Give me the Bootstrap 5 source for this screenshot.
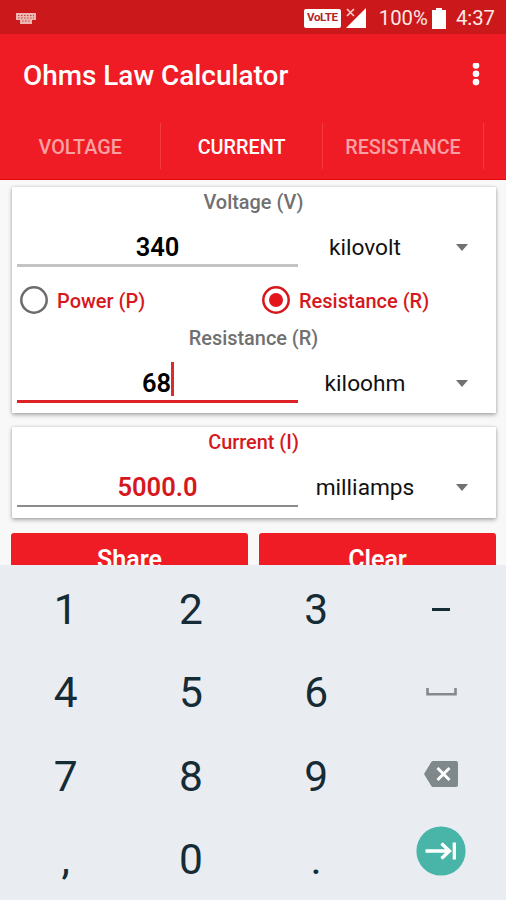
<!DOCTYPE html>
<html lang="en">
<head>
<meta charset="utf-8">
<meta name="viewport" content="width=device-width, initial-scale=1">
<title>Ohms Law Calculator</title>
<link href="https://cdn.jsdelivr.net/npm/bootstrap@5.3.0/dist/css/bootstrap.min.css" rel="stylesheet">
<style>
body{font-family:Roboto,sans-serif;background:#f8f8f8;color:#111;line-height:1}
svg{display:block;flex:none}
.screen{width:506px;height:900px}
.statusbar{height:34px;background:#cb181b;color:#fde9e6;font-size:20.3px;padding:2px 11px 0 16px}
.volte{width:37px;height:19px;background:#fff;color:#b3242a;font-size:11.5px;letter-spacing:-.3px;border-radius:2px}
.pct{margin-left:12px}
.batt{margin:0 10px 0 4px}
.signal{margin-left:4px}
.appbar{height:81px;background:#ef1c25;padding:2px 23px 0}
.app-title{font-size:27.9px;font-weight:500;color:#fff}
.tabs{height:65px;background:#ef1c25;border-bottom:1px solid #e3060f;padding:8px 0 10px}
.tab-cell{width:161.4px;font-size:19.8px;font-weight:500;color:#f9a0a2;border-right:1px solid #f5393f;padding-top:4px}
.tab-cell.current{color:#fff}
.content{height:385px;padding:7px 10px 0 12px}
.panel{background:#fff;border:0;border-radius:1px;box-shadow:0 2px 4px rgba(0,0,0,.3),0 0 3px rgba(0,0,0,.15);padding-left:5px}
.panel-main{height:226px}
.panel-result{height:91px;margin-top:14px}
.caption{height:30px;font-size:19.9px;font-weight:500;color:#707070;padding:1px 6px 0 0}
.red{color:#d6181d}
.entry{height:50px}
.field{width:281px;border-bottom:3px solid #c3c3c3;font-size:25.5px;font-weight:600;color:#000;padding-top:15px}
.field.active{border-color:#dd2226;padding-top:0}
.field.active .digits{padding:15px 0 0 1px}
.field.result{border-bottom:2px solid #8c8c8c;color:#d6181d;padding-top:13px}
.caret{width:3px;height:34px;background:#dc2a2e;margin-top:4px}
.unit{width:134px;font-size:22.7px;padding-top:13px}
.arrow{width:0;height:0;border:6.5px solid transparent;border-top:7px solid #707070;border-bottom:0;margin:11px 0 0 24px}
.choices{height:56px;padding:10px 0 0 3px;font-size:20px;font-weight:500}
.choice{width:242px;gap:9px;flex:none}
.choice + .choice{width:auto}
.choice span{padding-top:2px}
.action{height:52px;background:#ef1c25;color:#fff;font-size:25px;font-weight:600;border-radius:3px;border:0;padding:2px 0 0}
.actions{margin:15px 0 0 -1px;gap:11px}
.keypad{height:335px;background:#e9edf1;color:#152b35;font-size:42.5px;padding:3px 2px 0 3px}
.keyrow{height:83.6px}
.key{width:125.3px}
.key-space{padding-bottom:3px}
.key-delete{padding-bottom:5px}
.key-enter{padding-bottom:19px}
</style>
<script src="https://cdn.jsdelivr.net/npm/bootstrap@5.3.0/dist/js/bootstrap.bundle.min.js"></script>
</head>
<body>
<div class="screen d-flex flex-column overflow-hidden">
  <header>
    <div class="statusbar d-flex align-items-center">
      <svg width="20" height="11" viewBox="0 0 20 11"><path d="M0 0h20v7h-4v4H4V7H0z" fill="#efb5b0"/><path d="M2 2.5h16M2 5h16M6 8h8" stroke="#b64847" stroke-width="1" stroke-dasharray="1.5 1.5"/></svg>
      <span class="volte ms-auto d-flex align-items-center justify-content-center fw-bold">VoLTE</span>
      <svg class="signal" width="22" height="20" viewBox="0 0 22 20"><path d="M21 0v20H1z" fill="#fff"/><path d="M2 1l7 7M9 1L2 8" stroke="#fbd0cc" stroke-width="1.6"/></svg>
      <span class="pct">100%</span>
      <svg class="batt" width="14" height="21" viewBox="0 0 14 21"><path d="M4 0h6v2h4v19H0V2h4z" fill="#fff"/></svg>
      <span class="clock">4:37</span>
    </div>
    <div class="appbar d-flex align-items-center justify-content-between">
      <h1 class="app-title m-0">Ohms Law Calculator</h1>
      <svg width="14" height="26" viewBox="0 0 14 26" fill="#fff"><circle cx="7" cy="2.500" r="3.3"/><circle cx="7" cy="10.800" r="3.3"/><circle cx="7" cy="19.100" r="3.3"/></svg>
    </div>
    <nav class="tabs d-flex">
      <div class="tab-cell d-flex align-items-center justify-content-center">VOLTAGE</div>
      <div class="tab-cell current d-flex align-items-center justify-content-center">CURRENT</div>
      <div class="tab-cell d-flex align-items-center justify-content-center">RESISTANCE</div>
    </nav>
  </header>
  <main class="content overflow-hidden">
    <section class="panel panel-main">
      <div class="caption d-flex align-items-center justify-content-center">Voltage (V)</div>
      <div class="entry d-flex">
        <div class="field d-flex align-items-center justify-content-center">340</div>
        <div class="unit d-flex align-items-center justify-content-center">kilovolt</div>
        <div class="arrow align-self-center"></div>
      </div>
      <div class="choices red d-flex">
        <div class="choice d-flex align-items-center">
          <svg width="28" height="28" viewBox="0 0 28 28"><circle cx="14" cy="14" r="12.7" fill="none" stroke="#6c6c6c" stroke-width="2.5"/></svg>
          <span>Power (P)</span>
        </div>
        <div class="choice d-flex align-items-center">
          <svg width="28" height="28" viewBox="0 0 28 28"><circle cx="14" cy="14" r="12.7" fill="none" stroke="#d6181d" stroke-width="2.5"/><circle cx="14" cy="14" r="7" fill="#e3141b"/></svg>
          <span>Resistance (R)</span>
        </div>
      </div>
      <div class="caption d-flex align-items-center justify-content-center">Resistance (R)</div>
      <div class="entry d-flex">
        <div class="field active d-flex align-items-center justify-content-center"><span class="digits">68</span><span class="caret"></span></div>
        <div class="unit d-flex align-items-center justify-content-center">kiloohm</div>
        <div class="arrow align-self-center"></div>
      </div>
    </section>
    <section class="panel panel-result">
      <div class="caption red d-flex align-items-center justify-content-center">Current (I)</div>
      <div class="entry d-flex">
        <div class="field result d-flex align-items-center justify-content-center">5000.0</div>
        <div class="unit d-flex align-items-center justify-content-center">milliamps</div>
        <div class="arrow align-self-center"></div>
      </div>
    </section>
    <div class="actions d-flex">
      <button class="action btn flex-fill w-50">Share</button>
      <button class="action btn flex-fill w-50">Clear</button>
    </div>
  </main>
  <section class="keypad">
    <div class="keyrow d-flex align-items-center text-center"><span class="key">1</span><span class="key">2</span><span class="key">3</span>
      <span class="key d-flex justify-content-center"><svg width="18" height="3"><path d="M0 1.5h18" stroke="#152b35" stroke-width="3"/></svg></span></div>
    <div class="keyrow d-flex align-items-center text-center"><span class="key">4</span><span class="key">5</span><span class="key">6</span>
      <span class="key key-space d-flex justify-content-center"><svg width="31" height="8" viewBox="0 0 31 8"><path d="M1.5 0v6.2h28V0" fill="none" stroke="#85898c" stroke-width="2.6"/></svg></span></div>
    <div class="keyrow d-flex align-items-center text-center"><span class="key">7</span><span class="key">8</span><span class="key">9</span>
      <span class="key key-delete d-flex justify-content-center"><svg width="34" height="26" viewBox="0 0 34 26"><path d="M9 0h23q2 0 2 2v22q0 2-2 2H9q-1 0-1.700-1L0 13 7.300 1Q8 0 9 0z" fill="#7f888b"/><path d="M13.500 7l12 12M25.500 7l-12 12" stroke="#fff" stroke-width="3"/></svg></span></div>
    <div class="keyrow d-flex align-items-center text-center"><span class="key">,</span><span class="key">0</span><span class="key">.</span>
      <span class="key key-enter d-flex justify-content-center"><svg class="enter" width="50" height="50" viewBox="0 0 50 50"><circle cx="25" cy="25" r="24.600" fill="#48b5a8"/><path d="M9.500 25H34M25.500 17.500L33.500 25l-8 7.500M38.300 16.500v17" fill="none" stroke="#fff" stroke-width="3.300"/></svg></span></div>
  </section>
</div>
</body>
</html>
